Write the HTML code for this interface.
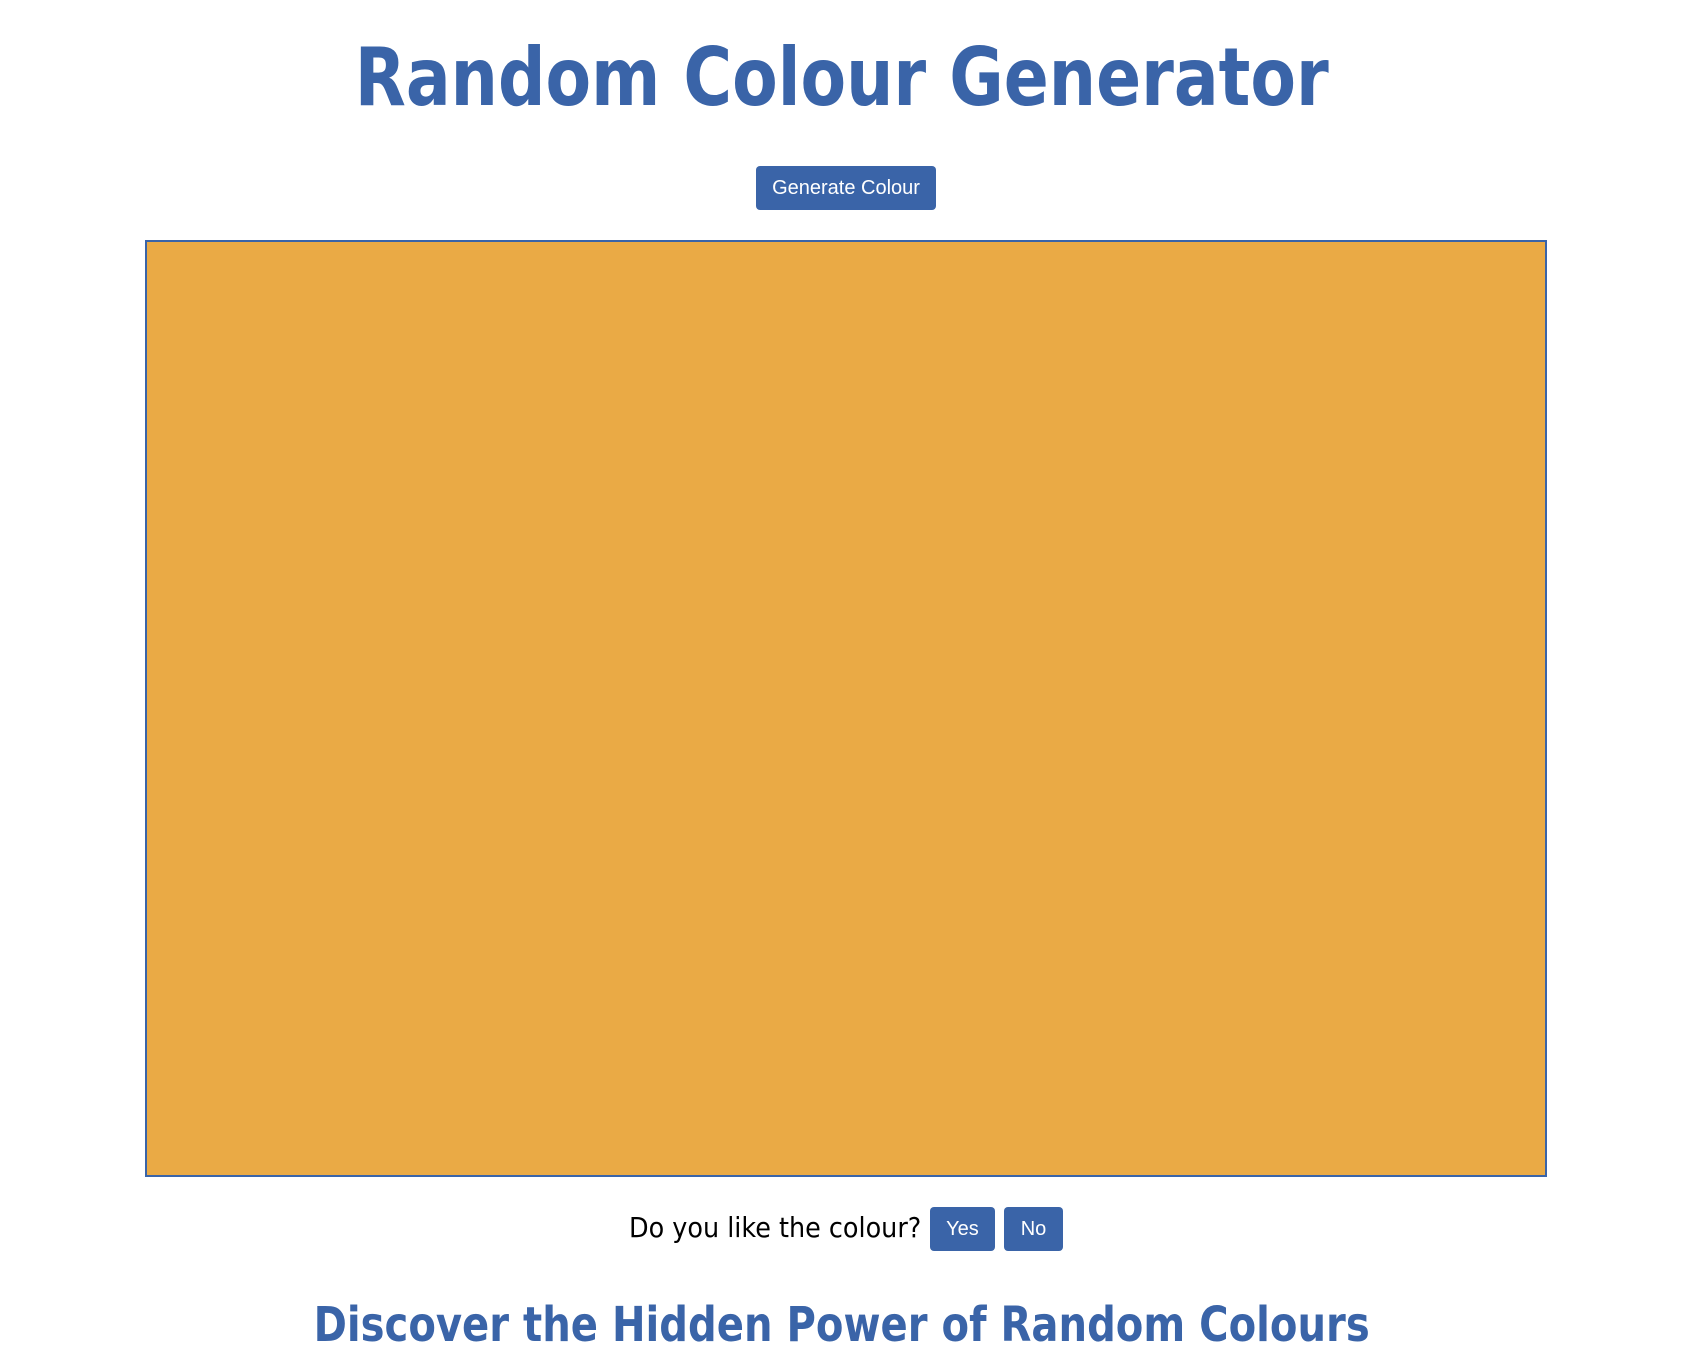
<!DOCTYPE html>
<html><head><style>
body{margin:0;width:1683px;height:1348px;overflow:hidden;background:#fff;font-family:"DejaVu Sans","Liberation Sans",sans-serif;}
.t{position:absolute;left:0;width:1683px;text-align:center;color:#3a64a8;font-weight:bold;white-space:nowrap}
.t span{display:inline-block}
.btn{position:absolute;background:#3a64a8;color:#fff;border-radius:4px;font-family:"Liberation Sans",sans-serif;font-size:20px;text-align:center}
</style></head><body>
<div class="t" style="top:28px;font-size:80px;line-height:100px"><span style="transform:scaleX(0.83)">Random Colour Generator</span></div>
<div class="btn" style="left:756px;top:166px;width:180px;height:44px;line-height:44px">Generate Colour</div>
<div style="position:absolute;left:145px;top:240px;width:1398px;height:933px;background:#eaaa45;border:2px solid #3a64a8"></div>
<div style="position:absolute;left:629px;top:1207px;font-size:28px;line-height:42px;color:#000;font-family:'DejaVu Sans',sans-serif"><span style="display:inline-block;transform:scaleX(0.91);transform-origin:left">Do you like the colour?</span></div>
<div class="btn" style="left:930px;top:1207px;width:65px;height:44px;line-height:44px">Yes</div>
<div class="btn" style="left:1004px;top:1207px;width:59px;height:44px;line-height:44px">No</div>
<div class="t" style="top:1295px;font-size:48px;line-height:60px"><span style="transform:scaleX(0.836)">Discover the Hidden Power of Random Colours</span></div>
</body></html>
